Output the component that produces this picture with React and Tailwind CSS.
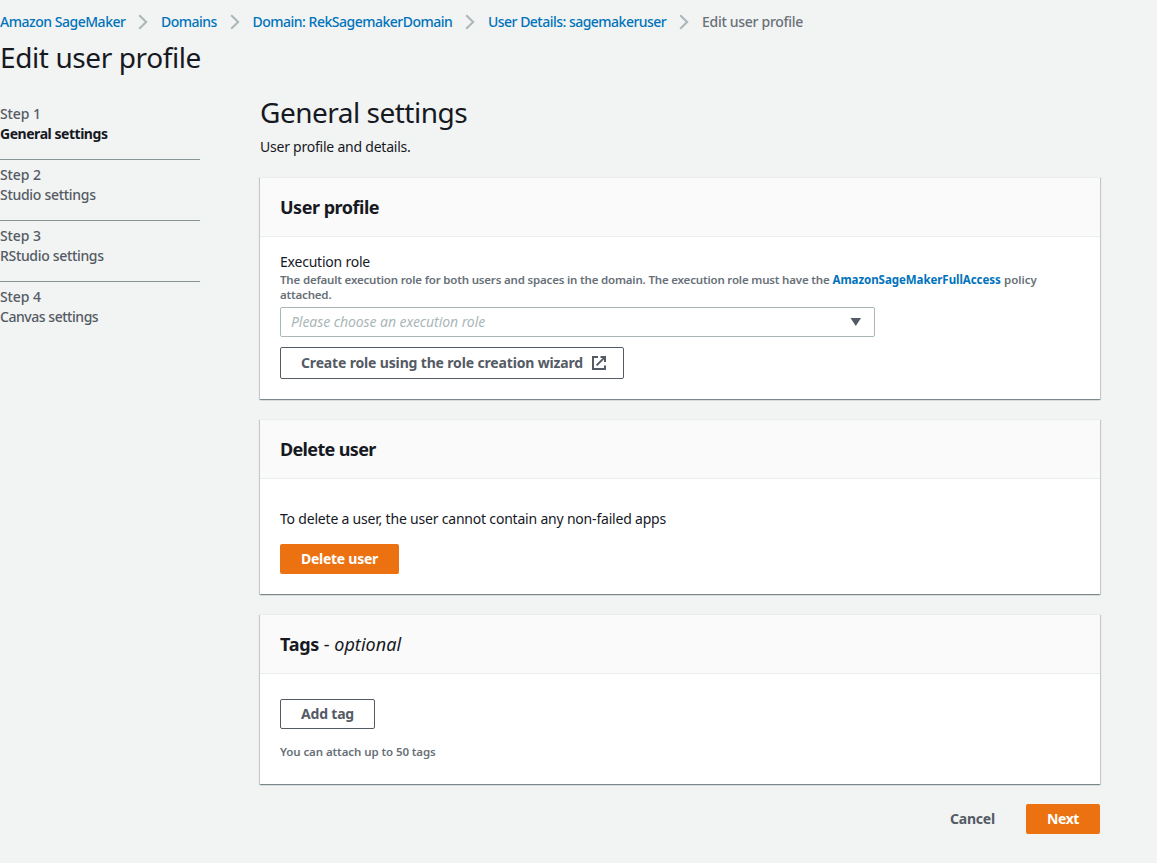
const crumbs = [
  { label: "Amazon SageMaker", className: "w-[125.5px] tracking-[-0.48px]" },
  { label: "Domains", className: "w-[56px] tracking-[-0.51px]" },
  { label: "Domain: RekSagemakerDomain", className: "w-[200px] tracking-[-0.5px]" },
  { label: "User Details: sagemakeruser", className: "w-[178.5px] tracking-[-0.52px]" },
];

const steps = [
  { label: "General settings", className: "font-bold text-[#16191f] tracking-[-0.46px]" },
  { label: "Studio settings", className: "font-medium tracking-[-0.29px]" },
  { label: "RStudio settings", className: "font-medium tracking-[-0.33px]" },
  { label: "Canvas settings", className: "font-medium tracking-[-0.46px]" },
];

function Chevron() {
  return (
    <svg className="mr-[13px] ml-[12.5px] h-4 w-[10px] shrink-0" viewBox="0 0 10 16" fill="none" stroke="#aab7b8" strokeWidth="2">
      <path d="M1.2 1.2 8.2 8l-7 6.8" />
    </svg>
  );
}

function ExternalIcon() {
  return (
    <svg className="h-4 w-4 shrink-0" viewBox="0 0 16 16" fill="none" stroke="#545b64" strokeWidth="2">
      <path d="M7 2H2v12h12v-3.4" />
      <path d="M9.5 2H14v5M13.6 2.4 5.6 10.4" />
    </svg>
  );
}

function Panel({ title, children, className }) {
  return (
    <section
      className={
        "flex flex-col border-t border-[#eaeded] bg-white shadow-[0_1px_1px_0_rgba(0,28,36,0.3),1px_1px_1px_0_rgba(0,28,36,0.15),-1px_1px_1px_0_rgba(0,28,36,0.15)] " +
        className
      }
    >
      <header className="flex h-[59px] shrink-0 items-center border-b border-[#eaeded] bg-[#fafafa] px-5 text-lg leading-[22px]">
        {title}
      </header>
      <div className="flex flex-col items-start px-5">{children}</div>
    </section>
  );
}

export default function App() {
  return (
    <div className="h-[863px] overflow-hidden bg-[#f2f3f3] font-['Noto_Sans','Open_Sans',sans-serif] text-sm leading-5 whitespace-nowrap text-[#16191f]">
      <nav className="flex h-[22px] items-center pt-[22px] font-medium text-[#0073bb]">
        {crumbs.map((c) => (
          <div key={c.label} className="flex items-center">
            <a className={c.className}>{c.label}</a>
            <Chevron />
          </div>
        ))}
        <span className="tracking-[-0.29px] text-[#687078]">Edit user profile</span>
      </nav>
      <h1 className="mt-[17px] text-[28px] leading-9 tracking-[-0.4px]">Edit user profile</h1>

      <div className="flex gap-[60px]">
        <ol className="mt-[29px] w-[200px] text-[#545b64]">
          {steps.map((s, i) => (
            <li key={s.label} className="h-[61px] [&:not(:last-child)>div]:border-b">
              <div className="h-[56px] border-[#879596]">
                <p className="font-medium tracking-[-0.1px]">Step {i + 1}</p>
                <p className={s.className}>{s.label}</p>
              </div>
            </li>
          ))}
        </ol>

        <main className="mt-[19px] w-[840px]">
          <h2 className="text-[28px] leading-9 tracking-[-0.5px]">General settings</h2>
          <p className="mt-[7px] tracking-[-0.23px]">User profile and details.</p>

          <Panel className="mt-5 h-[222px]" title={<span className="font-bold tracking-[-0.49px]">User profile</span>}>
            <label className="mt-[15px] tracking-[-0.22px]">Execution role</label>
            <p className="text-[11.5px] leading-[15px] font-semibold text-[#687078]">
              <span className="inline-block w-[552.5px] tracking-[-0.18px]">
                The default execution role for both users and spaces in the domain. The execution role must have the
              </span>
              <a className="inline-block w-[168.5px] font-bold tracking-[-0.05px] text-[#0073bb]">AmazonSageMakerFullAccess</a>
              <span> policy</span>
              <br />
              <span className="tracking-[-0.18px]">attached.</span>
            </p>
            <div className="mt-[5px] flex h-[30px] w-[595px] items-center justify-between rounded-[2px] border border-[#aab7b8] pr-[13px] pl-[10px]">
              <span className="tracking-[-0.07px] text-[#aab7b8] italic">Please choose an execution role</span>
              <svg className="h-2 w-[11px]" viewBox="0 0 11 8" fill="#545b64">
                <path d="M0.5 0h10.5L5.75 8z" />
              </svg>
            </div>
            <button className="mt-[10px] flex h-8 w-[344px] items-center gap-2 rounded-[2px] border border-[#545b64] pl-5 font-bold text-[#545b64]">
              <span className="w-[282px] tracking-[-0.157px]">Create role using the role creation wizard</span>
              <ExternalIcon />
            </button>
          </Panel>

          <Panel className="mt-5 h-[175px]" title={<span className="font-bold tracking-[-0.65px]">Delete user</span>}>
            <p className="mt-[30px] tracking-[-0.2px]">To delete a user, the user cannot contain any non-failed apps</p>
            <button className="mt-[15px] h-[30px] w-[119px] rounded-[2px] bg-[#ec7211] font-bold tracking-[-0.27px] text-white">
              Delete user
            </button>
          </Panel>

          <Panel
            className="mt-5 h-[170px]"
            title={
              <span>
                <b className="tracking-[-0.27px]">Tags</b>
                <span> - </span>
                <i className="tracking-[0.05px]">optional</i>
              </span>
            }
          >
            <button className="mt-[25px] h-[30px] w-[95px] rounded-[2px] border border-[#545b64] font-bold tracking-[-0.19px] text-[#545b64]">
              Add tag
            </button>
            <p className="mt-[15px] text-[11.5px] leading-4 font-semibold tracking-[-0.09px] text-[#687078]">You can attach up to 50 tags</p>
          </Panel>

          <div className="mt-5 flex justify-end gap-[31px] font-bold">
            <button className="h-[30px] tracking-[-0.2px] text-[#545b64]">Cancel</button>
            <button className="h-[30px] w-[74px] rounded-[2px] bg-[#ec7211] tracking-[-0.4px] text-white">Next</button>
          </div>
        </main>
      </div>
    </div>
  );
}
